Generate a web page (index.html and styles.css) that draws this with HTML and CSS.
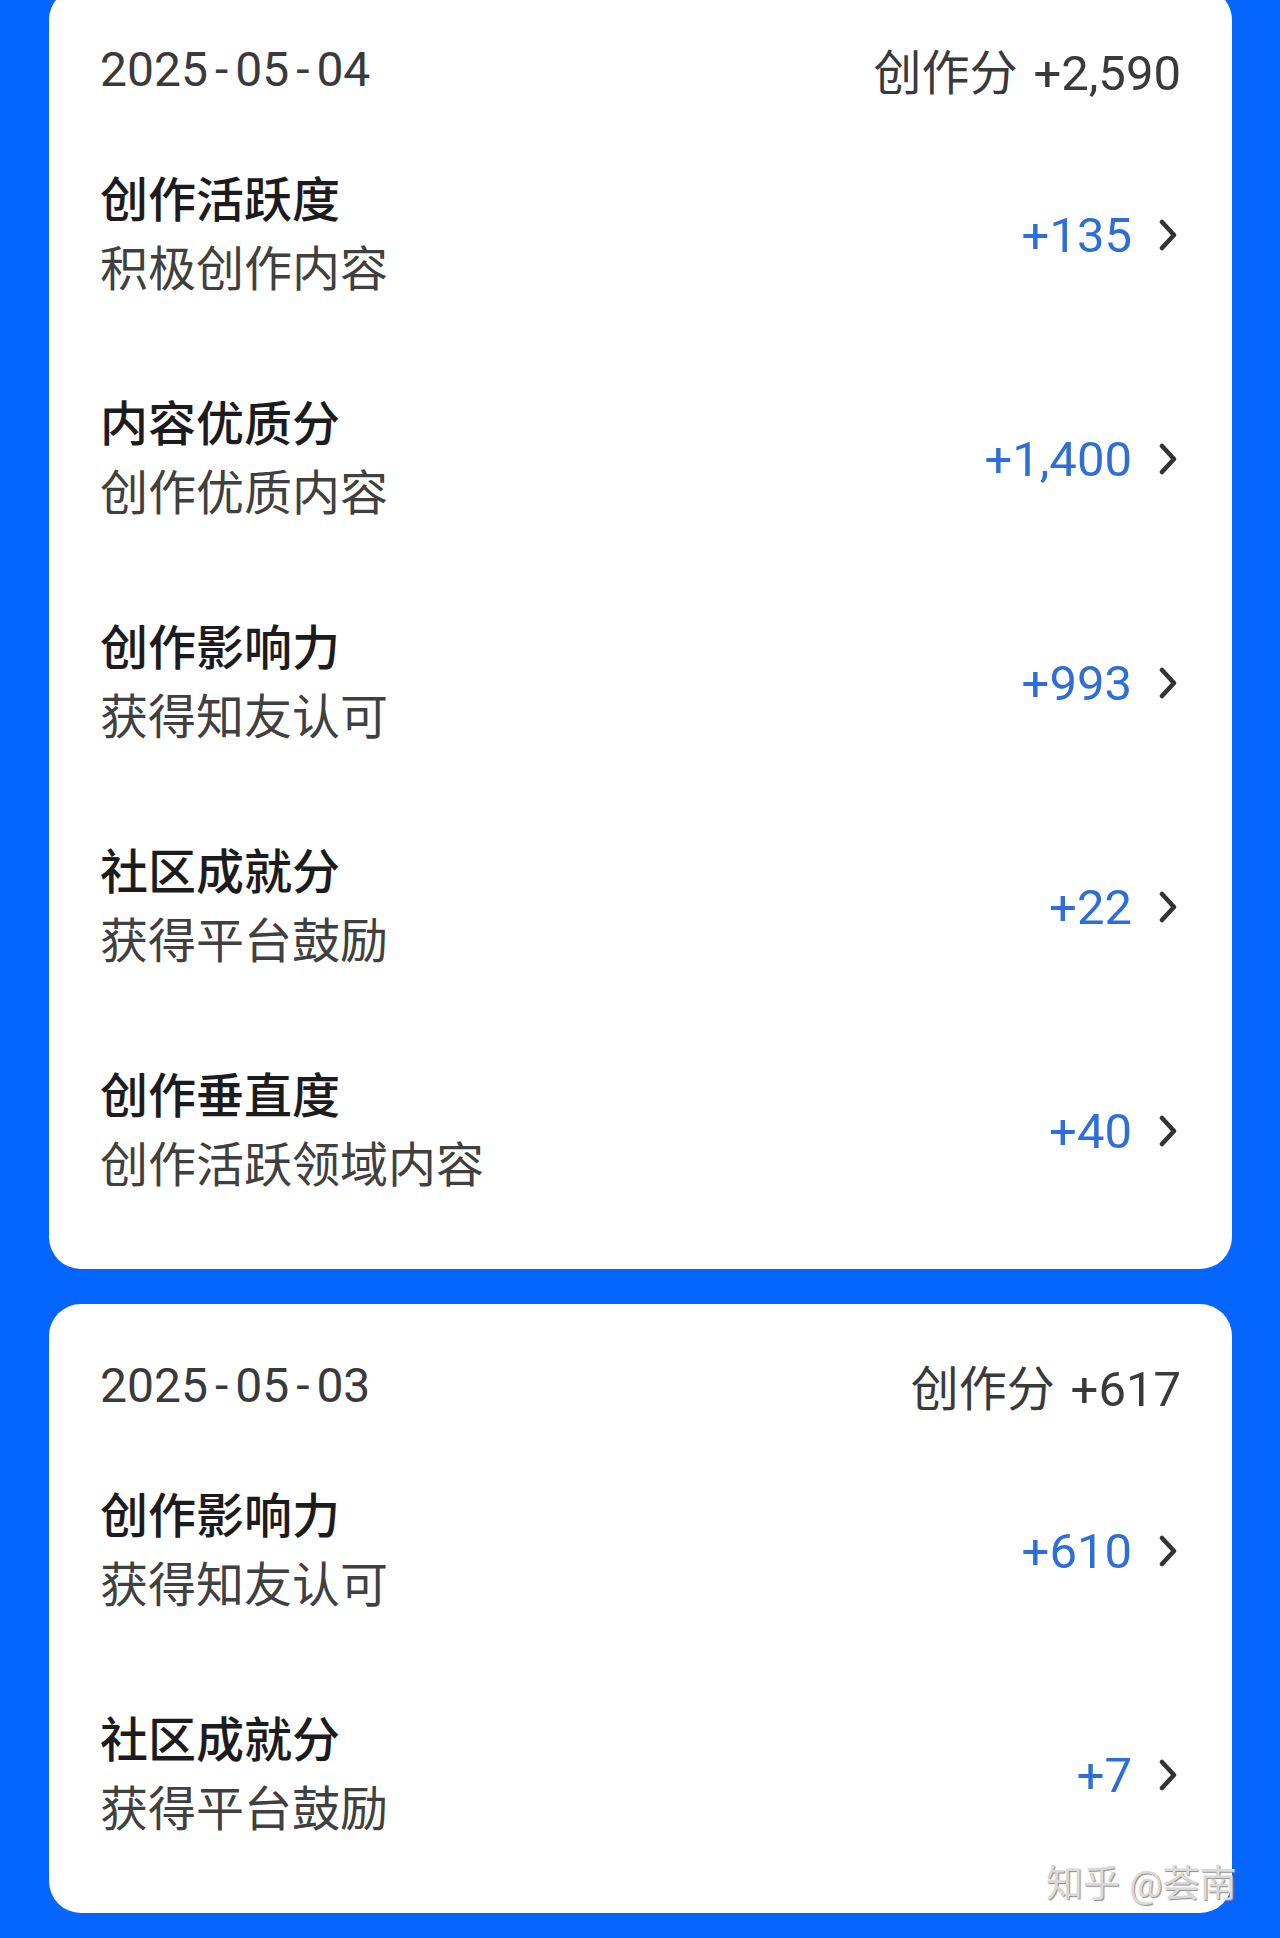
FILE: index.html
```html
<!DOCTYPE html>
<html lang="zh-CN">
<head>
    <meta charset="UTF-8">
    <meta name="viewport" content="width=device-width, initial-scale=1.0">
    <title>创作分明细</title>
    <link rel="stylesheet" href="styles.css">
</head>
<body>
    <div class="container">
        <section class="day-card">
            <div class="day-header">
                <span class="day-date">2025<span class="sep">-</span>05<span class="sep">-</span>04</span>
                <span class="day-total">创作分 <span class="num">+2,590</span></span>
            </div>
            <div class="score-row">
                <div class="score-info">
                    <div class="score-title">创作活跃度</div>
                    <div class="score-desc">积极创作内容</div>
                </div>
                <div class="score-value">
                    <span>+135</span>
                    <svg class="chevron" viewBox="0 0 24 32"><path d="M5 3 L17 16 L5 29"/></svg>
                </div>
            </div>
            <div class="score-row">
                <div class="score-info">
                    <div class="score-title">内容优质分</div>
                    <div class="score-desc">创作优质内容</div>
                </div>
                <div class="score-value">
                    <span>+1,400</span>
                    <svg class="chevron" viewBox="0 0 24 32"><path d="M5 3 L17 16 L5 29"/></svg>
                </div>
            </div>
            <div class="score-row">
                <div class="score-info">
                    <div class="score-title">创作影响力</div>
                    <div class="score-desc">获得知友认可</div>
                </div>
                <div class="score-value">
                    <span>+993</span>
                    <svg class="chevron" viewBox="0 0 24 32"><path d="M5 3 L17 16 L5 29"/></svg>
                </div>
            </div>
            <div class="score-row">
                <div class="score-info">
                    <div class="score-title">社区成就分</div>
                    <div class="score-desc">获得平台鼓励</div>
                </div>
                <div class="score-value">
                    <span>+22</span>
                    <svg class="chevron" viewBox="0 0 24 32"><path d="M5 3 L17 16 L5 29"/></svg>
                </div>
            </div>
            <div class="score-row">
                <div class="score-info">
                    <div class="score-title">创作垂直度</div>
                    <div class="score-desc">创作活跃领域内容</div>
                </div>
                <div class="score-value">
                    <span>+40</span>
                    <svg class="chevron" viewBox="0 0 24 32"><path d="M5 3 L17 16 L5 29"/></svg>
                </div>
            </div>
        </section>

        <section class="day-card">
            <div class="day-header">
                <span class="day-date">2025<span class="sep">-</span>05<span class="sep">-</span>03</span>
                <span class="day-total">创作分 <span class="num">+617</span></span>
            </div>
            <div class="score-row">
                <div class="score-info">
                    <div class="score-title">创作影响力</div>
                    <div class="score-desc">获得知友认可</div>
                </div>
                <div class="score-value">
                    <span>+610</span>
                    <svg class="chevron" viewBox="0 0 24 32"><path d="M5 3 L17 16 L5 29"/></svg>
                </div>
            </div>
            <div class="score-row">
                <div class="score-info">
                    <div class="score-title">社区成就分</div>
                    <div class="score-desc">获得平台鼓励</div>
                </div>
                <div class="score-value">
                    <span>+7</span>
                    <svg class="chevron" viewBox="0 0 24 32"><path d="M5 3 L17 16 L5 29"/></svg>
                </div>
            </div>
        </section>
    </div>

    <div class="watermark">知乎 @荟南</div>
</body>
</html>
```

FILE: styles.css
```css
body {
    font-family: Roboto, 'Noto Sans CJK SC', sans-serif;
    background-color: #0565ff;
    margin: 0;
    padding: 0;
    min-height: 100vh;
}

.container {
    padding: 0 48px 0 49px;
    display: flex;
    flex-direction: column;
    gap: 35px;
}

.day-card {
    background-color: #fff;
    border-radius: 32px;
    padding: 51px 51px 26px;
}

.day-card:first-child {
    margin-top: -12px;
}

.day-header {
    display: flex;
    justify-content: space-between;
    align-items: center;
    height: 60px;
    margin-bottom: 24px;
    font-size: 48px;
    color: #3a3a3c;
}

.day-date .sep {
    margin: 0 7px;
}

.day-total .num {
    margin-left: 4px;
    font-size: 49px;
}

.score-row {
    display: flex;
    justify-content: space-between;
    align-items: center;
    padding: 43px 0;
}

.score-title,
.score-desc {
    font-size: 48px;
    line-height: 69px;
}

.score-title {
    font-weight: 500;
    color: #1c1c1e;
}

.score-desc {
    color: #404040;
}

.score-value {
    display: flex;
    align-items: center;
    gap: 25px;
    font-size: 49px;
    color: #2d6fd6;
}

.chevron {
    width: 24px;
    height: 32px;
}

.chevron path {
    fill: none;
    stroke: #333;
    stroke-width: 4.5;
    stroke-linecap: round;
    stroke-linejoin: round;
}

.watermark {
    position: absolute;
    left: 1046px;
    top: 1862px;
    font-size: 37px;
    line-height: 46px;
    color: #d9d9d9;
    text-shadow: 1px 1px 1px #8a8a8a;
    white-space: nowrap;
}
```
